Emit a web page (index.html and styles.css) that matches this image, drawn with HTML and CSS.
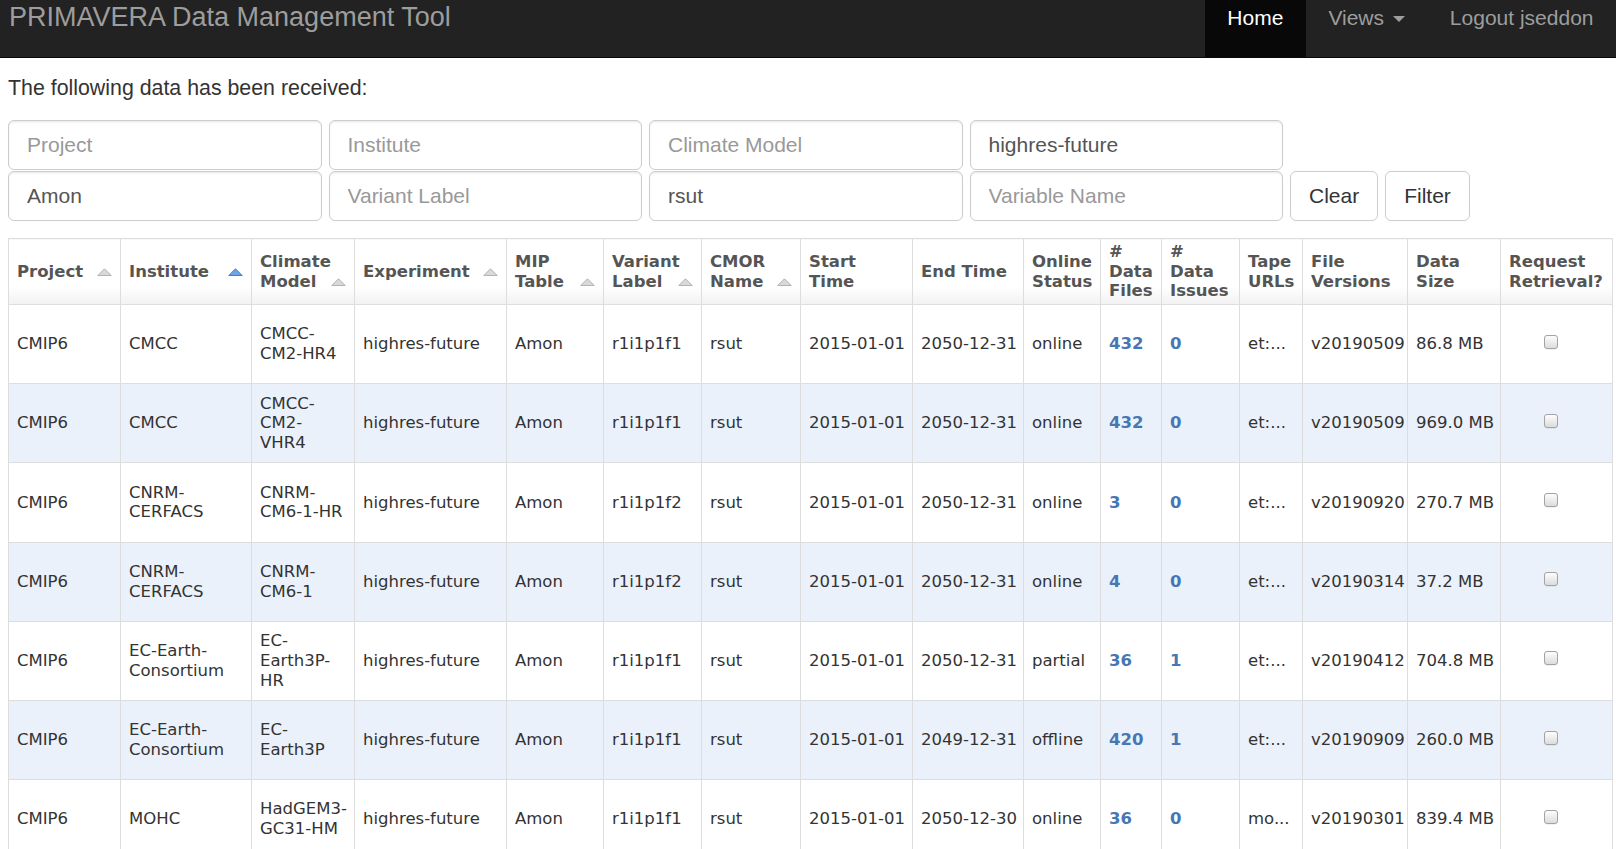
FILE: index.html
```html
<!DOCTYPE html>
<html lang="en">
<head>
<meta charset="utf-8">
<title>PRIMAVERA Data Management Tool</title>
<link rel="stylesheet" href="styles.css">
</head>
<body>
<nav class="navbar">
  <a class="brand" href="#">PRIMAVERA Data Management Tool</a>
  <ul class="nav">
    <li class="active"><a href="#">Home</a></li>
    <li><a href="#">Views <span class="caret"></span></a></li>
    <li><a href="#">Logout jseddon</a></li>
  </ul>
</nav>
<main class="content">
  <p class="intro">The following data has been received:</p>
  <form class="filters">
    <div class="filter-row">
      <input class="field" type="text" placeholder="Project">
      <input class="field" type="text" placeholder="Institute">
      <input class="field" type="text" placeholder="Climate Model">
      <input class="field" type="text" placeholder="Experiment" value="highres-future">
    </div>
    <div class="filter-row">
      <input class="field" type="text" placeholder="MIP Table" value="Amon">
      <input class="field" type="text" placeholder="Variant Label">
      <input class="field" type="text" placeholder="CMOR Name" value="rsut">
      <input class="field" type="text" placeholder="Variable Name">
      <button class="btn" type="button">Clear</button>
      <button class="btn" type="button">Filter</button>
    </div>
  </form>
  <table class="data">
    <colgroup>
      <col class="c-project"><col class="c-institute"><col class="c-model"><col class="c-exp">
      <col class="c-mip"><col class="c-variant"><col class="c-cmor"><col class="c-start">
      <col class="c-end"><col class="c-online"><col class="c-files"><col class="c-issues">
      <col class="c-tape"><col class="c-version"><col class="c-size"><col class="c-req">
    </colgroup>
    <thead>
      <tr>
        <th>Project<span class="sort"><svg width="15" height="8" viewBox="0 0 15 8"><polygon class="tri-off" points="0.8,7.5 7.5,0.8 14.2,7.5"/></svg></span></th>
        <th>Institute<span class="sort"><svg width="15" height="8" viewBox="0 0 15 8"><polygon class="tri-on" points="0.8,7.5 7.5,0.8 14.2,7.5"/></svg></span></th>
        <th>Climate Model<span class="sort"><svg width="15" height="8" viewBox="0 0 15 8"><polygon class="tri-off" points="0.8,7.5 7.5,0.8 14.2,7.5"/></svg></span></th>
        <th>Experiment<span class="sort"><svg width="15" height="8" viewBox="0 0 15 8"><polygon class="tri-off" points="0.8,7.5 7.5,0.8 14.2,7.5"/></svg></span></th>
        <th>MIP Table<span class="sort"><svg width="15" height="8" viewBox="0 0 15 8"><polygon class="tri-off" points="0.8,7.5 7.5,0.8 14.2,7.5"/></svg></span></th>
        <th>Variant Label<span class="sort"><svg width="15" height="8" viewBox="0 0 15 8"><polygon class="tri-off" points="0.8,7.5 7.5,0.8 14.2,7.5"/></svg></span></th>
        <th>CMOR Name<span class="sort"><svg width="15" height="8" viewBox="0 0 15 8"><polygon class="tri-off" points="0.8,7.5 7.5,0.8 14.2,7.5"/></svg></span></th>
        <th>Start Time</th>
        <th>End Time</th>
        <th>Online Status</th>
        <th># Data Files</th>
        <th># Data Issues</th>
        <th>Tape URLs</th>
        <th>File Versions</th>
        <th>Data Size</th>
        <th>Request Retrieval?</th>
      </tr>
    </thead>
    <tbody>
      <tr>
        <td>CMIP6</td><td>CMCC</td><td>CMCC-CM2-HR4</td><td>highres-future</td><td>Amon</td><td>r1i1p1f1</td><td>rsut</td>
        <td class="nw">2015-01-01</td><td class="nw">2050-12-31</td><td>online</td>
        <td><a class="num" href="#">432</a></td><td><a class="num" href="#">0</a></td><td>et:...</td>
        <td class="nw">v20190509</td><td class="nw">86.8 MB</td><td class="chk"><input class="pick" type="checkbox"></td>
      </tr>
      <tr>
        <td>CMIP6</td><td>CMCC</td><td>CMCC-CM2-VHR4</td><td>highres-future</td><td>Amon</td><td>r1i1p1f1</td><td>rsut</td>
        <td class="nw">2015-01-01</td><td class="nw">2050-12-31</td><td>online</td>
        <td><a class="num" href="#">432</a></td><td><a class="num" href="#">0</a></td><td>et:...</td>
        <td class="nw">v20190509</td><td class="nw">969.0 MB</td><td class="chk"><input class="pick" type="checkbox"></td>
      </tr>
      <tr>
        <td>CMIP6</td><td>CNRM-CERFACS</td><td>CNRM-CM6-1-HR</td><td>highres-future</td><td>Amon</td><td>r1i1p1f2</td><td>rsut</td>
        <td class="nw">2015-01-01</td><td class="nw">2050-12-31</td><td>online</td>
        <td><a class="num" href="#">3</a></td><td><a class="num" href="#">0</a></td><td>et:...</td>
        <td class="nw">v20190920</td><td class="nw">270.7 MB</td><td class="chk"><input class="pick" type="checkbox"></td>
      </tr>
      <tr>
        <td>CMIP6</td><td>CNRM-CERFACS</td><td>CNRM-CM6-1</td><td>highres-future</td><td>Amon</td><td>r1i1p1f2</td><td>rsut</td>
        <td class="nw">2015-01-01</td><td class="nw">2050-12-31</td><td>online</td>
        <td><a class="num" href="#">4</a></td><td><a class="num" href="#">0</a></td><td>et:...</td>
        <td class="nw">v20190314</td><td class="nw">37.2 MB</td><td class="chk"><input class="pick" type="checkbox"></td>
      </tr>
      <tr>
        <td>CMIP6</td><td>EC-Earth-Consortium</td><td>EC-Earth3P-HR</td><td>highres-future</td><td>Amon</td><td>r1i1p1f1</td><td>rsut</td>
        <td class="nw">2015-01-01</td><td class="nw">2050-12-31</td><td>partial</td>
        <td><a class="num" href="#">36</a></td><td><a class="num" href="#">1</a></td><td>et:...</td>
        <td class="nw">v20190412</td><td class="nw">704.8 MB</td><td class="chk"><input class="pick" type="checkbox"></td>
      </tr>
      <tr>
        <td>CMIP6</td><td>EC-Earth-Consortium</td><td>EC-Earth3P</td><td>highres-future</td><td>Amon</td><td>r1i1p1f1</td><td>rsut</td>
        <td class="nw">2015-01-01</td><td class="nw">2049-12-31</td><td>offline</td>
        <td><a class="num" href="#">420</a></td><td><a class="num" href="#">1</a></td><td>et:...</td>
        <td class="nw">v20190909</td><td class="nw">260.0 MB</td><td class="chk"><input class="pick" type="checkbox"></td>
      </tr>
      <tr>
        <td>CMIP6</td><td>MOHC</td><td>HadGEM3-GC31-HM</td><td>highres-future</td><td>Amon</td><td>r1i1p1f1</td><td>rsut</td>
        <td class="nw">2015-01-01</td><td class="nw">2050-12-30</td><td>online</td>
        <td><a class="num" href="#">36</a></td><td><a class="num" href="#">0</a></td><td>mo...</td>
        <td class="nw">v20190301</td><td class="nw">839.4 MB</td><td class="chk"><input class="pick" type="checkbox"></td>
      </tr>
    </tbody>
  </table>
</main>
</body>
</html>
```
FILE: styles.css
```css
html, body {
  margin: 0;
  padding: 0;
}
body {
  overflow: hidden;
  background: #fff;
  color: #333;
  font-family: "Liberation Sans", Arial, sans-serif;
  font-size: 21px;
}

/* ---------- navbar ---------- */
.navbar {
  display: flex;
  justify-content: space-between;
  height: 57px;
  background: #222;
  border-bottom: 1px solid #080808;
}
.brand {
  padding-left: 9px;
  font-size: 27px;
  line-height: 35px;
  color: #9d9d9d;
  text-decoration: none;
  white-space: nowrap;
}
.nav {
  display: flex;
  margin: 0;
  padding: 0;
  list-style: none;
}
.nav li {
  display: flex;
}
.nav a {
  display: block;
  box-sizing: border-box;
  padding: 3px 22.5px 0;
  font-size: 21px;
  line-height: 30px;
  color: #9d9d9d;
  text-decoration: none;
  white-space: nowrap;
}
.nav .active a {
  background: #080808;
  color: #fff;
}
.caret {
  display: inline-block;
  width: 0;
  height: 0;
  margin-left: 3px;
  vertical-align: middle;
  border-top: 6px solid;
  border-left: 6px solid transparent;
  border-right: 6px solid transparent;
}

/* ---------- content ---------- */
.content {
  padding: 0 8px;
}
.intro {
  margin: 15px 0 0;
  font-size: 21.35px;
  line-height: 30px;
}
.filters {
  display: flex;
  flex-direction: column;
  gap: 1px;
  margin-top: 17px;
}
.filter-row {
  display: flex;
  gap: 7px;
}
.field {
  box-sizing: border-box;
  width: 313.5px;
  height: 50px;
  margin: 0;
  padding: 0 18px;
  font-family: "Liberation Sans", Arial, sans-serif;
  font-size: 21px;
  color: #555;
  background: #fff;
  border: 1px solid #ccc;
  border-radius: 6px;
  box-shadow: inset 0 1.5px 1.5px rgba(0, 0, 0, 0.075);
  outline: none;
}
.field::placeholder {
  color: #999;
}
.btn {
  box-sizing: border-box;
  height: 50px;
  margin: 0;
  padding: 0 18px;
  font-family: "Liberation Sans", Arial, sans-serif;
  font-size: 21px;
  color: #333;
  background: #fff;
  border: 1px solid #ccc;
  border-radius: 6px;
}

/* ---------- table ---------- */
.data {
  margin-top: 17px;
  width: 1604px;
  table-layout: fixed;
  border-collapse: collapse;
  font-family: "DejaVu Sans", Verdana, sans-serif;
  font-size: 16.5px;
  line-height: 19.8px;
  color: #333;
}
.c-project { width: 112px; }
.c-institute { width: 131px; }
.c-model { width: 103px; }
.c-exp { width: 152px; }
.c-mip { width: 97px; }
.c-variant { width: 98px; }
.c-cmor { width: 99px; }
.c-start { width: 112px; }
.c-end { width: 111px; }
.c-online { width: 77px; }
.c-files { width: 61px; }
.c-issues { width: 78px; }
.c-tape { width: 63px; }
.c-version { width: 105px; }
.c-size { width: 93px; }
.c-req { width: 112px; }

.data th,
.data td {
  padding: 0 8px;
  border: 1px solid #ddd;
  text-align: left;
  vertical-align: middle;
}
.data thead tr {
  height: 66px;
}
.data th {
  color: #555;
  font-weight: bold;
  background: linear-gradient(#fff 0%, #fff 72%, #f1f1f1 100%);
}
.data tbody tr {
  height: 79.2px;
}
.data tbody tr:nth-child(even) td {
  background: #eaf1fb;
}
.data td.nw {
  white-space: nowrap;
}
.sort {
  float: right;
  width: 15px;
  height: 8px;
  margin: 6px 0 0 6px;
}
.sort svg {
  display: block;
}
.tri-off {
  fill: #d9d9d9;
  stroke: #b3b3b3;
  stroke-width: 1;
  stroke-linejoin: round;
}
.tri-on {
  fill: #6aa6e8;
  stroke: #3f7fc8;
  stroke-width: 1;
  stroke-linejoin: round;
}
.num {
  color: #4677b4;
  font-weight: bold;
  text-decoration: none;
}
.data td.chk {
  text-align: center;
  padding-right: 21px;
}
.pick {
  appearance: none;
  -webkit-appearance: none;
  box-sizing: border-box;
  width: 14px;
  height: 14px;
  margin: 3px 3px 3px 4px;
  border: 1px solid #a3a3a3;
  border-radius: 3px;
  background: linear-gradient(#fdfdfd, #dcdcdc);
  box-shadow: 0 0.5px 0.5px rgba(0, 0, 0, 0.1);
  vertical-align: baseline;
}
```
